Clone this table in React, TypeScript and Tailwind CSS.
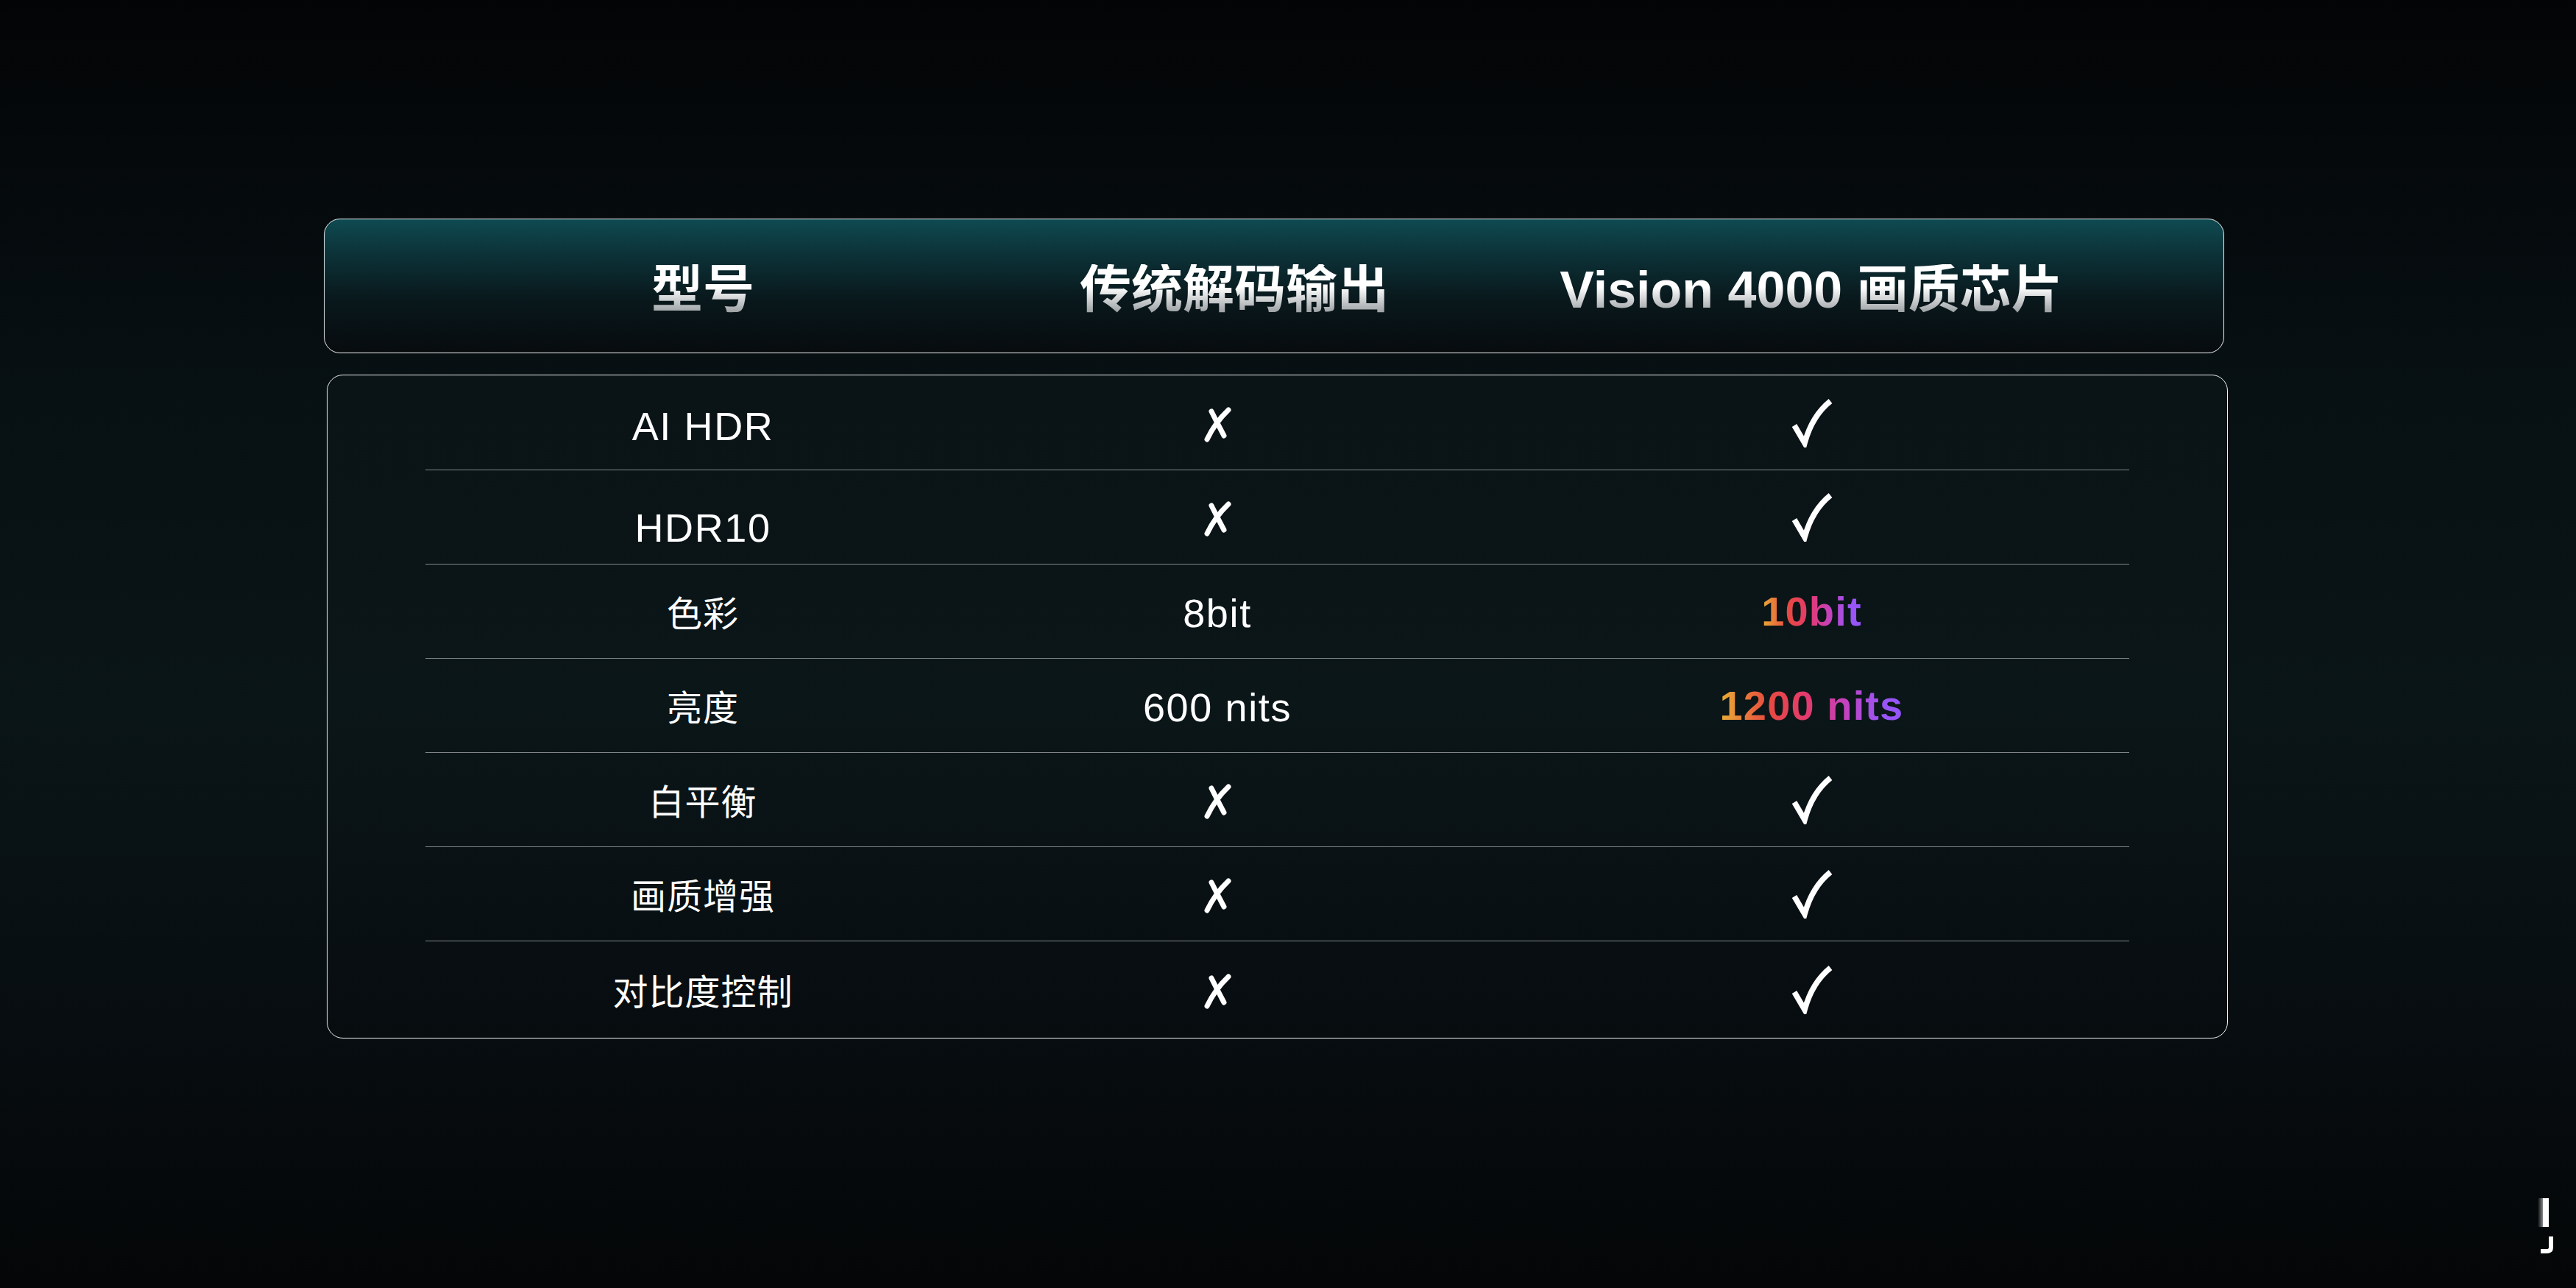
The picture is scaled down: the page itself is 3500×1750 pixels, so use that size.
import React from 'react';

type Cell =
    | { kind: 'text'; value: string }
    | { kind: 'grad'; value: string }
    | { kind: 'yes' }
    | { kind: 'no' };

interface Row {
    label: string;
    cjk: boolean;
    legacy: Cell;
    vision: Cell;
}

const rows: Row[] = [
    { label: 'AI HDR', cjk: false, legacy: { kind: 'no' }, vision: { kind: 'yes' } },
    { label: 'HDR10', cjk: false, legacy: { kind: 'no' }, vision: { kind: 'yes' } },
    { label: '色彩', cjk: true, legacy: { kind: 'text', value: '8bit' }, vision: { kind: 'grad', value: '10bit' } },
    { label: '亮度', cjk: true, legacy: { kind: 'text', value: '600 nits' }, vision: { kind: 'grad', value: '1200 nits' } },
    { label: '白平衡', cjk: true, legacy: { kind: 'no' }, vision: { kind: 'yes' } },
    { label: '画质增强', cjk: true, legacy: { kind: 'no' }, vision: { kind: 'yes' } },
    { label: '对比度控制', cjk: true, legacy: { kind: 'no' }, vision: { kind: 'yes' } },
];

const CheckMark = () => (
    <svg width="62" height="67" viewBox="0 0 62 67" fill="none">
        <path d="M7 37 L21 61 Q31 24 56 4" stroke="#ffffff" strokeWidth="7.5" strokeLinejoin="miter" />
    </svg>
);

const CrossMark = () => (
    <svg width="38" height="48" viewBox="0 0 38 48" fill="none">
        <path d="M11 6 Q19 22 28 39" stroke="#ffffff" strokeWidth="7" strokeLinecap="round" />
        <path d="M34 4 Q16 21 5 44" stroke="#ffffff" strokeWidth="7" strokeLinecap="round" />
    </svg>
);

const HeaderText = ({ children }: { children: React.ReactNode }) => (
    <span className="inline-block bg-linear-to-b from-white from-45% to-[#8f9598] bg-clip-text text-transparent text-[70px] font-bold leading-none">
        {children}
    </span>
);

const renderCell = (cell: Cell) => {
    if (cell.kind === 'yes') return <CheckMark />;
    if (cell.kind === 'no') return <CrossMark />;
    if (cell.kind === 'grad') {
        return (
            <span className="inline-block bg-[linear-gradient(90deg,#e9ae35_0%,#e84a40_26%,#e23a70_48%,#c442bd_68%,#9a55f6_88%,#9455f8_100%)] bg-clip-text text-transparent text-[56px] font-bold tracking-[0.02em] leading-none">
                {cell.value}
            </span>
        );
    }
    return <span className="text-[54px] tracking-[0.03em] leading-none text-white">{cell.value}</span>;
};

export default function App() {
    return (
        <div className="relative w-full h-[1750px] overflow-hidden bg-[linear-gradient(180deg,#030405_0%,#071013_30%,#0a1518_55%,#070d10_80%,#040607_100%)] font-['Liberation_Sans','Noto_Sans_CJK_SC',sans-serif]">
            <div className="flex flex-col pt-[297px]">
                {/* header bar */}
                <div className="ml-[440px] w-[2582px] h-[183px] rounded-[22px] border-[1.5px] border-[#eef2f2] bg-[linear-gradient(180deg,#0f4a51_0%,#0c3339_25%,#09181c_60%,#070b0e_100%)] grid grid-cols-[754px_690px_878px] items-center pl-[137px] pt-[10px]">
                    <div className="text-center"><HeaderText>型号</HeaderText></div>
                    <div className="text-center"><HeaderText>传统解码输出</HeaderText></div>
                    <div className="text-center"><HeaderText>Vision 4000 画质芯片</HeaderText></div>
                </div>

                {/* comparison table */}
                <div className="ml-[444px] mt-[29px] w-[2583px] h-[902px] rounded-[22px] border-[1.5px] border-[#eef2f2] bg-[linear-gradient(180deg,#0a1316_0%,#0b1619_50%,#070c0f_100%)] px-[133px] pt-[1px] flex flex-col">
                    {rows.map((row, i) => (
                        <div
                            key={row.label}
                            className={
                                i < rows.length - 1
                                    ? 'h-[128px] shrink-0 border-b border-[#80868a] grid grid-cols-[754px_644px_1fr] items-center text-white'
                                    : 'flex-1 grid grid-cols-[754px_644px_1fr] items-center text-white'
                            }
                        >
                            <div className={row.label === 'HDR10' ? 'flex justify-center pt-[28px]' : 'flex justify-center pt-[8px]'}>
                                {row.cjk ? (
                                    <span className="text-[48px] tracking-[0.02em] leading-none">{row.label}</span>
                                ) : (
                                    <span className="text-[54px] tracking-[0.03em] leading-none">{row.label}</span>
                                )}
                            </div>
                            <div className="flex justify-center pt-[4px]">{renderCell(row.legacy)}</div>
                            <div className="flex justify-center pl-[54px]">{renderCell(row.vision)}</div>
                        </div>
                    ))}
                </div>
            </div>

            {/* cut-off mark in the corner */}
            <svg className="absolute left-[3444px] top-[1624px]" width="30" height="84" viewBox="0 0 30 84" fill="none">
                <defs>
                    <linearGradient id="fade" x1="0" y1="0" x2="1" y2="0">
                        <stop offset="0" stopColor="#ffffff" stopOpacity="0" />
                        <stop offset="1" stopColor="#ffffff" stopOpacity="0.6" />
                    </linearGradient>
                </defs>
                <rect x="4" y="4" width="8" height="39" fill="url(#fade)" />
                <rect x="11" y="4" width="8" height="39" fill="#ffffff" />
                <path d="M22 56 L22 71 Q22 76 16 76 L8 76" stroke="#ffffff" strokeWidth="6" />
            </svg>
        </div>
    );
}
